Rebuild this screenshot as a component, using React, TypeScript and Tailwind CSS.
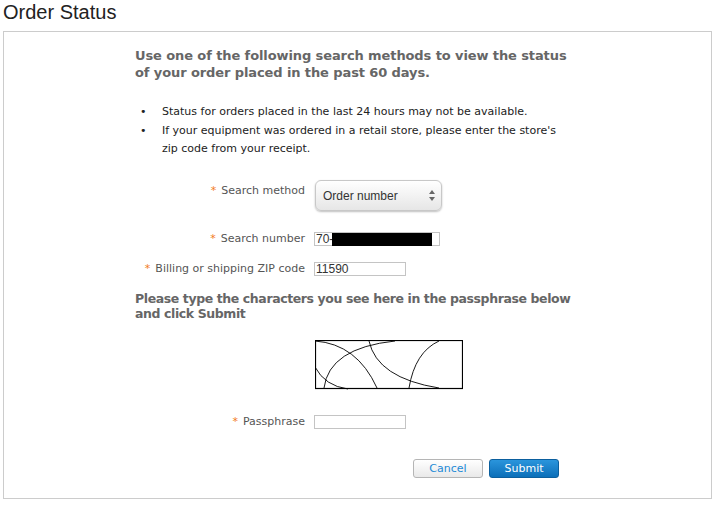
import React from "react";

const Star = () => <span className="text-[#f27b20] mr-[5px]">*</span>;

function Captcha() {
  return (
    <svg width="148" height="50" viewBox="0 0 148 50" className="block">
      <rect x="0.5" y="0.5" width="147" height="48" fill="#fff" stroke="#000" strokeWidth="1.2" />
      <g fill="none" stroke="#000" strokeWidth="0.9">
        <path d="M0 1 Q42 4 62 48" />
        <path d="M9 48 Q14 8 80 1" />
        <path d="M54 1 Q62 38 124 48" />
        <path d="M94 48 Q100 12 124 1" />
        <path d="M0 27 Q10 46 33 49" />
      </g>
    </svg>
  );
}

export default function App() {
  return (
    <div className="w-[716px] h-[506px] bg-white relative overflow-hidden" style={{ fontFamily: '"DejaVu Sans", Verdana, sans-serif' }}>
      <h1 className="pl-[3px] pt-[0px] text-[20px] leading-[24px] text-[#222] h-[31px]" style={{ fontFamily: '"Liberation Sans", Arial, sans-serif' }}>
        Order Status
      </h1>
      <div className="ml-[3px] w-[709px] h-[468px] border border-[#cccccc] pl-[131px] pt-[15px]">
        <div className="w-[460px] text-[13px] leading-[17px] font-bold text-[#666] whitespace-nowrap tracking-[-0.1px]">
          Use one of the following search methods to view the status
          <br />
          of your order placed in the past 60 days.
        </div>
        <ul className="mt-[22px] text-[11px] leading-[18px] text-[#222] w-[440px]">
          <li className="flex mb-[1px]">
            <span className="w-[27px] pl-[5px]">•</span>
            <span>Status for orders placed in the last 24 hours may not be available.</span>
          </li>
          <li className="flex">
            <span className="w-[27px] pl-[5px] shrink-0">•</span>
            <span>
              If your equipment was ordered in a retail store, please enter the store's
              <br />
              zip code from your receipt.
            </span>
          </li>
        </ul>
        <div className="text-[11px] text-[#555] mt-[22px]">
          <div className="flex">
            <div className="w-[170px] text-right pt-[4px] leading-[14px]"><Star />Search method</div>
            <div className="ml-[10px] w-[127px] h-[31px] rounded-[6px] border border-[#c8c8c8] bg-gradient-to-b from-white to-[#e6e6e6] shadow-[0_1px_2px_rgba(0,0,0,0.25)] flex items-center justify-between pl-[7px] pr-[6px]" style={{ fontFamily: '"Liberation Sans", Arial, sans-serif' }}>
              <span className="text-[12px] text-[#333]">Order number</span>
              <svg width="6" height="11" viewBox="0 0 6 11"><path d="M0 4 L3 0 L6 4 Z M0 7 L3 11 L6 7 Z" fill="#666" /></svg>
            </div>
          </div>
          <div className="flex mt-[21px] items-center">
            <div className="w-[170px] text-right leading-[14px]"><Star />Search number</div>
            <div className="ml-[9px] w-[126px] h-[14px] border border-[#c4c4c4] flex items-center" style={{ fontFamily: '"Liberation Sans", Arial, sans-serif' }}>
              <span className="text-[12px] text-[#333] pl-[1px] leading-[12px]">70-</span>
              <span className="w-[100px] h-[13px] bg-black ml-[-1px]" />
            </div>
          </div>
          <div className="flex mt-[16px] items-center">
            <div className="w-[170px] text-right leading-[14px] whitespace-nowrap"><Star />Billing or shipping ZIP code</div>
            <div className="ml-[9px] w-[92px] h-[14px] border border-[#c4c4c4] flex items-center" style={{ fontFamily: '"Liberation Sans", Arial, sans-serif' }}>
              <span className="text-[12px] text-[#333] pl-[1px] leading-[12px]">11590</span>
            </div>
          </div>
        </div>
        <div className="mt-[15px] w-[460px] text-[12.5px] leading-[15px] font-bold text-[#666] whitespace-nowrap tracking-[-0.4px]">
          Please type the characters you see here in the passphrase below
          <br />
          and click Submit
        </div>
        <div className="ml-[180px] mt-[19px]">
          <Captcha />
        </div>
        <div className="flex mt-[25px] items-center text-[11px] text-[#555]">
          <div className="w-[170px] text-right leading-[14px]"><Star />Passphrase</div>
          <div className="ml-[9px] w-[92px] h-[14px] border border-[#c4c4c4]" />
        </div>
        <div className="flex mt-[30px] ml-[278px] gap-[6px]">
          <button className="w-[70px] h-[19px] rounded-[3px] border border-[#b5b5b5] bg-gradient-to-b from-white to-[#e9e9e9] text-[11px] leading-[17px] text-[#1e8ad6]">Cancel</button>
          <button className="w-[70px] h-[19px] rounded-[3px] border border-[#0b5f9e] bg-gradient-to-b from-[#2a95dc] to-[#0a6fb9] text-[11px] leading-[17px] text-white">Submit</button>
        </div>
      </div>
    </div>
  );
}
